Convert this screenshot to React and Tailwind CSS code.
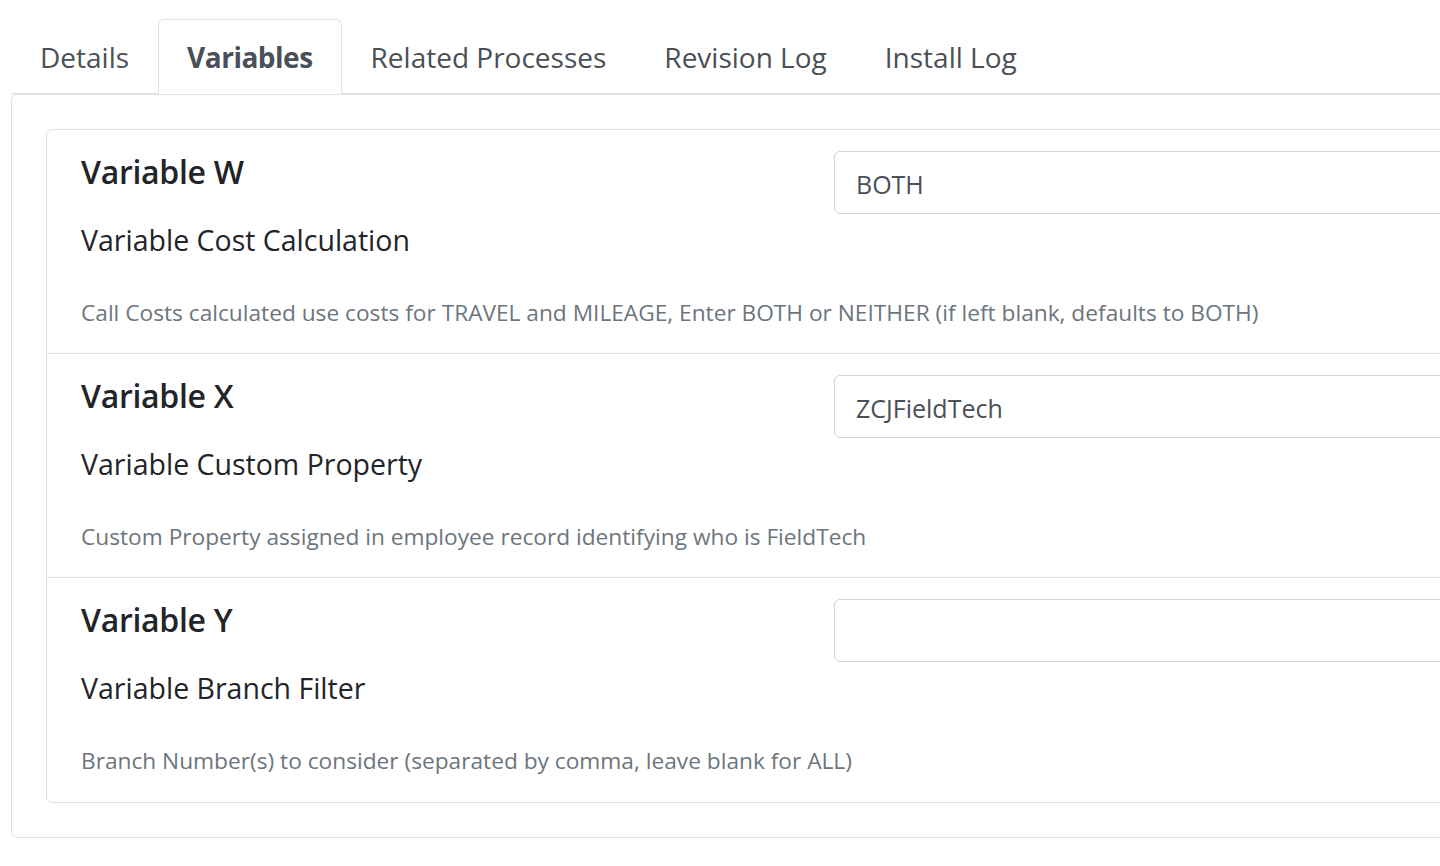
const tabs = ["Details", "Variables", "Related Processes", "Revision Log", "Install Log"];

const variables = [
  {
    name: "Variable W",
    label: "Variable Cost Calculation",
    value: "BOTH",
    help: "Call Costs calculated use costs for TRAVEL and MILEAGE, Enter BOTH or NEITHER (if left blank, defaults to BOTH)",
  },
  {
    name: "Variable X",
    label: "Variable Custom Property",
    value: "ZCJFieldTech",
    help: "Custom Property assigned in employee record identifying who is FieldTech",
  },
  {
    name: "Variable Y",
    label: "Variable Branch Filter",
    value: "",
    help: "Branch Number(s) to consider (separated by comma, leave blank for ALL)",
  },
];

function VariableRow({ item, last }) {
  return (
    <div className={`h-[224px] ${last ? "" : "border-b border-[#dfdfdf]"} pl-[34px] pt-[20px] flex`}>
      <div className="w-[753px] shrink-0">
        <h4 className="text-[32px] leading-[44px] font-semibold text-[#212529] tracking-[-0.3px]">{item.name}</h4>
        <div className="mt-[26px] text-[28.5px] leading-[40px] text-[#212529]">{item.label}</div>
        <div className="mt-[38px] text-[22.7px] leading-[30px] text-[#6c757d] whitespace-nowrap">{item.help}</div>
      </div>
      <input
        readOnly
        value={item.value}
        className="mt-[1px] h-[63px] w-[700px] shrink-0 border border-[#ced4da] rounded-[6px] px-[21px] pt-[3px] text-[25px] text-[#495057] outline-none"
      />
    </div>
  );
}

export default function App() {
  return (
    <div className="w-[1440px] h-[866px] overflow-hidden bg-white font-['Open_Sans',sans-serif]">
      <div className="pl-[11px] pt-[19px] w-[1600px]">
        {/* tabs */}
        <ul className="flex border-b border-[#dee2e6]">
          {tabs.map((t) => (
            <li
              key={t}
              className={`h-[75px] px-[28px] flex items-center text-[28px] text-[#495057] -mb-px border rounded-t-[6px] ${
                t === "Variables" ? "border-[#dee2e6] border-b-white bg-white font-bold tracking-[-0.5px]" : "border-transparent"
              }`}
            >
              {t}
            </li>
          ))}
        </ul>

        {/* tab content */}
        <div className="h-[744px] border border-[#dee2e6] rounded-[6px] p-[34px]">
          <div className="border border-[#dfdfdf] rounded-[6px]">
            {variables.map((v, i) => (
              <VariableRow key={v.name} item={v} last={i === variables.length - 1} />
            ))}
          </div>
        </div>
      </div>
    </div>
  );
}
